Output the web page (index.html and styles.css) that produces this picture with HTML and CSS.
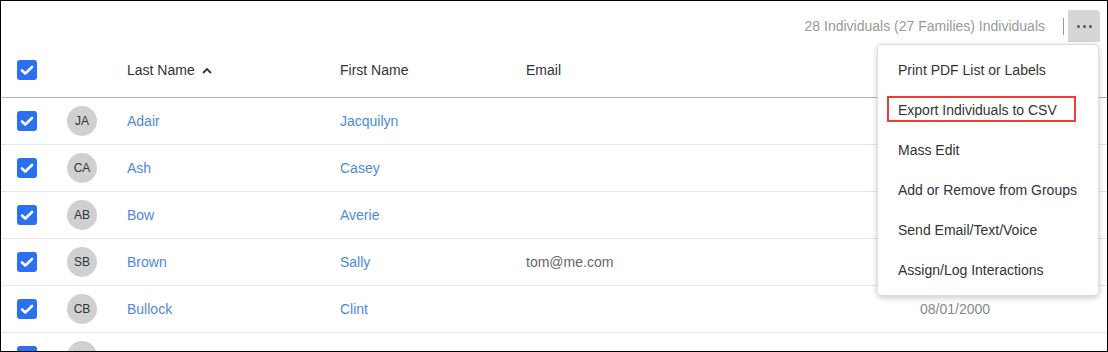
FILE: index.html
```html
<!DOCTYPE html>
<html lang="en">
    <head>
        <meta charset="UTF-8">
        <title>Individuals</title>
        <link rel="stylesheet" href="styles.css">
    </head>
    <body>
        <div class="frame">
            <div class="toolbar">
                <span class="count">28 Individuals (27 Families) Individuals</span>
                <span class="sep"></span>
                <button class="more"><i></i><i></i><i></i></button>
            </div>
            <div class="row head">
                <span class="cb"></span>
                <span></span>
                <span class="sort">Last Name <svg width="10" height="7" viewBox="0 0 10 7"><path d="M1 6L5 2L9 6" fill="none" stroke="#333" stroke-width="1.8"/></svg></span>
                <span>First Name</span>
                <span>Email</span>
                <span></span>
            </div>
            <div class="row">
                <span class="cb"></span><span class="av">JA</span>
                <a class="link">Adair</a><a class="link">Jacquilyn</a><span></span><span></span>
            </div>
            <div class="row">
                <span class="cb"></span><span class="av">CA</span>
                <a class="link">Ash</a><a class="link">Casey</a><span></span><span></span>
            </div>
            <div class="row">
                <span class="cb"></span><span class="av">AB</span>
                <a class="link">Bow</a><a class="link">Averie</a><span></span><span></span>
            </div>
            <div class="row">
                <span class="cb"></span><span class="av">SB</span>
                <a class="link">Brown</a><a class="link">Sally</a><span class="mail">tom@me.com</span><span></span>
            </div>
            <div class="row">
                <span class="cb"></span><span class="av">CB</span>
                <a class="link">Bullock</a><a class="link">Clint</a><span></span><span class="date">08/01/2000</span>
            </div>
            <div class="row">
                <span class="cb"></span><span class="av"></span>
                <span></span><span></span><span></span><span></span>
            </div>

            <!-- menu from the ... button -->
            <ul class="menu">
                <li>Print PDF List or Labels</li>
                <li class="marked">Export Individuals to CSV</li>
                <li>Mass Edit</li>
                <li>Add or Remove from Groups</li>
                <li>Send Email/Text/Voice</li>
                <li>Assign/Log Interactions</li>
            </ul>
        </div>
    </body>
</html>
```

FILE: styles.css
```css
body{margin:0;background:#fff;font-family:"Liberation Sans",Arial,sans-serif;font-size:14px;color:#333;}
.frame{position:relative;width:1108px;height:352px;box-sizing:border-box;border:1px solid #000;overflow:hidden;}

/* top bar */
.toolbar{display:flex;align-items:center;justify-content:flex-end;height:42px;padding:8px 7px 0 0;box-sizing:border-box;}
.count{color:#999;margin-right:18px;}
.sep{width:1px;height:17px;background:#999;margin-right:4px;}
.more{display:flex;align-items:center;justify-content:center;gap:3px;width:32px;height:32px;border:0;background:#d6d6d6;border-radius:0 4px 0 0;padding:0;}
.more i{display:block;width:3px;height:3px;border-radius:50%;background:#555;}

/* table rows */
.row{display:grid;grid-template-columns:50px 60px 213px 186px 394px 1fr;align-items:center;height:47px;box-sizing:border-box;padding-left:16px;border-bottom:1px solid #e6e6e6;}
.row.head{height:55px;border-bottom:1px solid #b3b3b3;}
.cb{width:20px;height:20px;border-radius:3px;background:#2a70f0 url("data:image/svg+xml,%3Csvg xmlns='http://www.w3.org/2000/svg' width='20' height='20'%3E%3Cpath d='M5 10.5l3.3 3L15 7' fill='none' stroke='white' stroke-width='2.6' stroke-linecap='round' stroke-linejoin='round'/%3E%3C/svg%3E") center no-repeat;}
.av{display:flex;align-items:center;justify-content:center;width:30px;height:30px;border-radius:50%;background:#d0d0d0;font-size:12px;color:#333;}
.link{color:#4d8ad6;}
.mail{color:#666;}
.date{color:#888;}
.sort svg{margin-left:3px;vertical-align:1px;}

/* dropdown menu */
.menu{position:absolute;left:876px;top:43px;width:222px;margin:0;padding:5px 0;list-style:none;background:#fff;border:1px solid #ddd;border-radius:4px;box-shadow:0 2px 6px rgba(0,0,0,.2);box-sizing:border-box;}
.menu li{height:40px;line-height:40px;padding-left:20px;color:#333;}
/* highlight box */
.menu .marked{position:relative;}
.menu .marked::after{content:"";position:absolute;left:9px;top:6px;width:189px;height:26px;border:2px solid #ee3b3b;box-sizing:border-box;}
```
